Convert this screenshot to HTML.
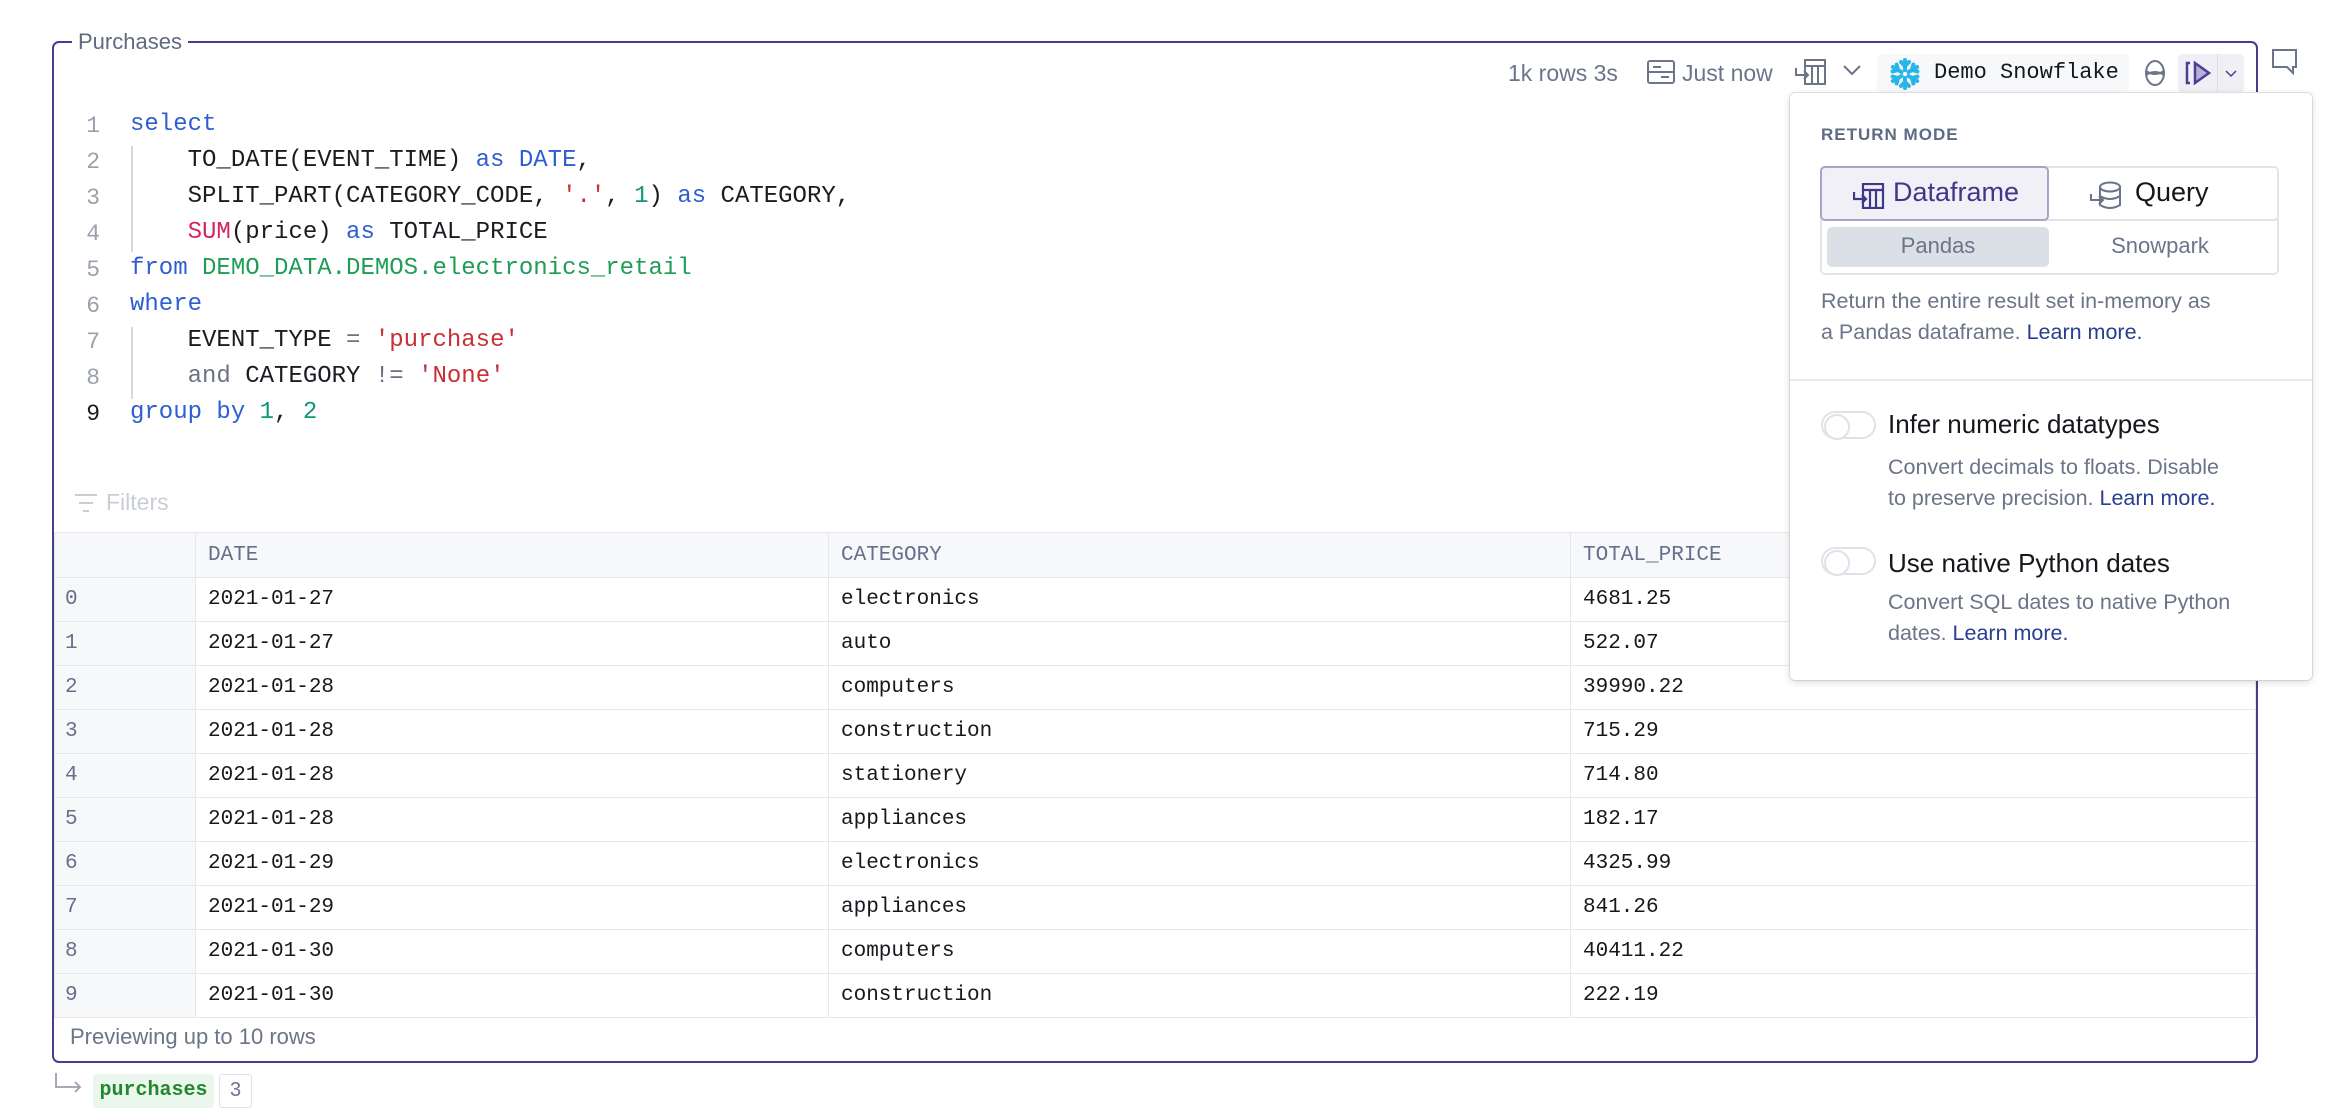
<!DOCTYPE html>
<html><head><meta charset="utf-8"><style>
*{box-sizing:border-box;margin:0;padding:0}
body{width:2350px;height:1120px;background:#fff;position:relative;overflow:hidden;font-family:"Liberation Sans",sans-serif;color:#1c1f26}
.abs{position:absolute}
.mono{font-family:"Liberation Mono",monospace}
.card{left:52px;top:41px;width:2206px;height:1022px;border:2px solid #463e8c;border-radius:7px}
.title{left:72px;top:28px;background:#fff;padding:0 6px;font-size:22px;color:#5f6b80;line-height:28px}
.tb{font-size:23px;color:#6b7489;line-height:30px;top:58px}
.ln{position:absolute;left:86px;width:14px;text-align:right;font-size:23px;color:#9aa1ad;font-family:"Liberation Mono",monospace}
.cl{position:absolute;left:130px;font-size:24px;font-family:"Liberation Mono",monospace;white-space:pre;color:#1a1c22}
.k{color:#2d5fd0}.s{color:#c83038}.n{color:#11967a}.g{color:#1f9d55}.f{color:#d8245c}.o{color:#6b7280}
table{border-collapse:collapse;position:absolute;left:54px;top:532px;width:2202px;font-family:"Liberation Mono",monospace;font-size:21px}
td,th{border:1.5px solid #e6e8ee;height:44px;padding:0 0 0 12px;text-align:left;font-weight:normal;color:#16181d}
th{background:#f7f8fa;color:#66708a;height:45px}
td.i{background:#f7f8fa;color:#66708a;padding-left:10px}
.pop{left:1790px;top:93px;width:522px;height:587px;background:#fff;border-radius:5px;box-shadow:0 2px 8px rgba(0,0,0,.15),0 0 0 1px #e5e7eb}
.desc{font-size:21.5px;color:#6b7488;line-height:31px}
.lk{color:#283e8f}
.tog{width:55px;height:28px;border:2px solid #dfe2e8;border-radius:14px;background:#fff}
.tog::after{content:"";position:absolute;left:1px;top:1px;width:22px;height:22px;border-radius:50%;border:2px solid #dfe2e8;background:#fff}
</style></head><body>
<div class="abs card"></div>
<div class="abs title">Purchases</div>

<div class="abs tb" style="left:1508px">1k rows 3s</div>
<svg class="abs" style="left:1647px;top:60px" width="28" height="24" viewBox="0 0 28 24" fill="none" stroke="#6b7489" stroke-width="2"><rect x="1" y="1" width="26" height="22" rx="2"/><line x1="1" y1="12" x2="27" y2="12"/><line x1="6" y1="7" x2="14" y2="7"/><line x1="14" y1="17" x2="22" y2="17"/></svg>
<div class="abs tb" style="left:1682px">Just now</div>
<svg class="abs" style="left:1795px;top:59px" width="32" height="26" viewBox="0 0 32 26" fill="none" stroke="#6b7489" stroke-width="2"><rect x="10" y="1" width="20" height="24"/><line x1="10" y1="7" x2="30" y2="7"/><line x1="17" y1="7" x2="17" y2="25"/><line x1="23" y1="7" x2="23" y2="25"/><path d="M1 9v7h12M9 12l4 4-4 4"/></svg>
<svg class="abs" style="left:1843px;top:64px" width="18" height="12" viewBox="0 0 18 12" fill="none" stroke="#6b7489" stroke-width="2"><path d="M1 2l8 8 8-8"/></svg>
<div class="abs" style="left:1877px;top:54px;width:252px;height:38px;background:#f7f8fa;border-radius:5px"></div>
<svg class="abs" style="left:1888px;top:58px" width="34" height="32" viewBox="-17 -16 34 32" stroke="#29b5e8" stroke-width="4" stroke-linecap="round" fill="none"><g id="a"><path d="M0-4V-14M-4-12L0-8 4-12"/></g><use href="#a" transform="rotate(60)"/><use href="#a" transform="rotate(120)"/><use href="#a" transform="rotate(180)"/><use href="#a" transform="rotate(240)"/><use href="#a" transform="rotate(300)"/></svg>
<div class="abs mono" style="left:1934px;top:60px;font-size:22px;color:#15171c">Demo Snowflake</div>
<svg class="abs" style="left:2144px;top:59px" width="22" height="28" viewBox="0 0 22 28" fill="none" stroke="#6b7489" stroke-width="2"><ellipse cx="11" cy="14" rx="9" ry="12"/><path d="M2 12q9 6 18 0M2 16q9-6 18 0"/></svg>
<div class="abs" style="left:2178px;top:54px;width:66px;height:39px;background:#efeff5;border-radius:5px"></div>
<div class="abs" style="left:2217px;top:54px;width:1px;height:39px;background:#dcdce6"></div>
<svg class="abs" style="left:2185px;top:60px" width="28" height="26" viewBox="0 0 28 26" fill="none" stroke="#4a3f95" stroke-width="2.5"><path d="M5 3H2v20h3"/><path d="M10 3l14 10-14 10z" fill="#b7b0d6"/></svg>
<svg class="abs" style="left:2225px;top:70px" width="12" height="8" viewBox="0 0 12 8" fill="none" stroke="#4a3f95" stroke-width="1.5"><path d="M1 1l5 5 5-5"/></svg>
<svg class="abs" style="left:2272px;top:49px" width="26" height="26" viewBox="0 0 26 26" fill="none" stroke="#6b7489" stroke-width="2"><path d="M1 1h23v17h-3v6l-6-6H1z"/></svg>

<div class="ln" style="top:113px">1</div><div class="cl" style="top:111px"><span class="k">select</span></div>
<div class="ln" style="top:149px">2</div><div class="cl" style="top:147px">    TO_DATE(EVENT_TIME) <span class="k">as DATE</span>,</div>
<div class="ln" style="top:185px">3</div><div class="cl" style="top:183px">    SPLIT_PART(CATEGORY_CODE, <span class="s">'.'</span>, <span class="n">1</span>) <span class="k">as</span> CATEGORY,</div>
<div class="ln" style="top:221px">4</div><div class="cl" style="top:219px">    <span class="f">SUM</span>(price) <span class="k">as</span> TOTAL_PRICE</div>
<div class="ln" style="top:257px">5</div><div class="cl" style="top:255px"><span class="k">from</span> <span class="g">DEMO_DATA.DEMOS.electronics_retail</span></div>
<div class="ln" style="top:293px">6</div><div class="cl" style="top:291px"><span class="k">where</span></div>
<div class="ln" style="top:329px">7</div><div class="cl" style="top:327px">    EVENT_TYPE <span class="o">=</span> <span class="s">'purchase'</span></div>
<div class="ln" style="top:365px">8</div><div class="cl" style="top:363px">    <span class="o">and</span> CATEGORY <span class="o">!=</span> <span class="s">'None'</span></div>
<div class="ln" style="top:401px;color:#1a1c22">9</div><div class="cl" style="top:399px"><span class="k">group by</span> <span class="n">1</span>, <span class="n">2</span></div>
<div class="abs" style="left:131px;top:146px;width:1.5px;height:106px;background:#d5d8de"></div>
<div class="abs" style="left:131px;top:327px;width:1.5px;height:72px;background:#d5d8de"></div>

<svg class="abs" style="left:74px;top:493px" width="24" height="20" viewBox="0 0 24 20" stroke="#c9ced6" stroke-width="2"><path d="M1 2h22M5 10h14M9 18h6"/></svg>
<div class="abs" style="left:106px;top:489px;font-size:23px;color:#c9ced6">Filters</div>

<table>
<tr><th style="width:141px"></th><th style="width:633px">DATE</th><th style="width:742px">CATEGORY</th><th>TOTAL_PRICE</th></tr>
<tr><td class="i">0</td><td>2021-01-27</td><td>electronics</td><td>4681.25</td></tr>
<tr><td class="i">1</td><td>2021-01-27</td><td>auto</td><td>522.07</td></tr>
<tr><td class="i">2</td><td>2021-01-28</td><td>computers</td><td>39990.22</td></tr>
<tr><td class="i">3</td><td>2021-01-28</td><td>construction</td><td>715.29</td></tr>
<tr><td class="i">4</td><td>2021-01-28</td><td>stationery</td><td>714.80</td></tr>
<tr><td class="i">5</td><td>2021-01-28</td><td>appliances</td><td>182.17</td></tr>
<tr><td class="i">6</td><td>2021-01-29</td><td>electronics</td><td>4325.99</td></tr>
<tr><td class="i">7</td><td>2021-01-29</td><td>appliances</td><td>841.26</td></tr>
<tr><td class="i">8</td><td>2021-01-30</td><td>computers</td><td>40411.22</td></tr>
<tr><td class="i">9</td><td>2021-01-30</td><td>construction</td><td>222.19</td></tr>
</table>
<div class="abs" style="left:70px;top:1024px;font-size:22px;color:#6b7489">Previewing up to 10 rows</div>

<svg class="abs" style="left:54px;top:1072px" width="30" height="22" viewBox="0 0 30 22" fill="none" stroke="#9aa1ad" stroke-width="1.8"><path d="M2 1v14h24M21 10l5 5-5 5"/></svg>
<div class="abs mono" style="left:93px;top:1074px;width:121px;height:34px;background:#ebf6ec;border-radius:4px;color:#23882c;font-weight:bold;font-size:20px;line-height:34px;text-align:center">purchases</div>
<div class="abs" style="left:219px;top:1074px;width:33px;height:34px;border:1.5px solid #dfe2e8;border-radius:3px;color:#6b7489;font-size:20px;line-height:31px;text-align:center">3</div>

<div class="abs pop">
  <div class="abs" style="left:31px;top:32px;font-size:17px;font-weight:bold;letter-spacing:1px;color:#5f6b80">RETURN MODE</div>
  <div class="abs" style="left:30px;top:73px;width:459px;height:55px;border:2px solid #e2e4ea;border-radius:5px"></div>
  <div class="abs" style="left:30px;top:73px;width:229px;height:55px;border:2px solid #a9a3cb;background:#f1f0f6;border-radius:5px"></div>
  <svg class="abs" style="left:63px;top:90px" width="32" height="26" viewBox="0 0 32 26" fill="none" stroke="#40378a" stroke-width="2.2"><rect x="10" y="1" width="20" height="24"/><line x1="10" y1="7" x2="30" y2="7"/><line x1="17" y1="7" x2="17" y2="25"/><line x1="23" y1="7" x2="23" y2="25"/><path d="M1 9v7h12M9 12l4 4-4 4"/></svg>
  <div class="abs" style="left:103px;top:84px;font-size:27px;color:#40378a">Dataframe</div>
  <svg class="abs" style="left:300px;top:88px" width="32" height="30" viewBox="0 0 32 30" fill="none" stroke="#6b7489" stroke-width="2"><ellipse cx="20" cy="6" rx="10" ry="4.5"/><path d="M10 6v18q10 6 20 0V6M10 15q10 6 20 0"/><path d="M1 13v6h12M9 15l4 4-4 4"/></svg>
  <div class="abs" style="left:345px;top:84px;font-size:27px;color:#15171c">Query</div>
  <div class="abs" style="left:30px;top:126px;width:459px;height:56px;border:2px solid #e2e4ea;border-top:none;border-radius:0 0 5px 5px"></div>
  <div class="abs" style="left:37px;top:134px;width:222px;height:40px;background:#dbdfe6;border-radius:5px"></div>
  <div class="abs" style="left:37px;top:140px;width:222px;text-align:center;font-size:22px;color:#6b7489">Pandas</div>
  <div class="abs" style="left:259px;top:140px;width:222px;text-align:center;font-size:22px;color:#6b7489">Snowpark</div>
  <div class="abs desc" style="left:31px;top:193px;width:400px">Return the entire result set in-memory as a Pandas dataframe. <span class="lk">Learn more.</span></div>
  <div class="abs" style="left:0;top:286px;width:522px;height:2px;background:#e8eaee"></div>
  <div class="abs tog" style="left:31px;top:318px"></div>
  <div class="abs" style="left:98px;top:316px;font-size:26px;color:#15171c">Infer numeric datatypes</div>
  <div class="abs desc" style="left:98px;top:359px;width:345px">Convert decimals to floats. Disable to preserve precision. <span class="lk">Learn more.</span></div>
  <div class="abs tog" style="left:31px;top:454px"></div>
  <div class="abs" style="left:98px;top:455px;font-size:26px;color:#15171c">Use native Python dates</div>
  <div class="abs desc" style="left:98px;top:494px;width:395px">Convert SQL dates to native Python dates. <span class="lk">Learn more.</span></div>
</div>
</body></html>
